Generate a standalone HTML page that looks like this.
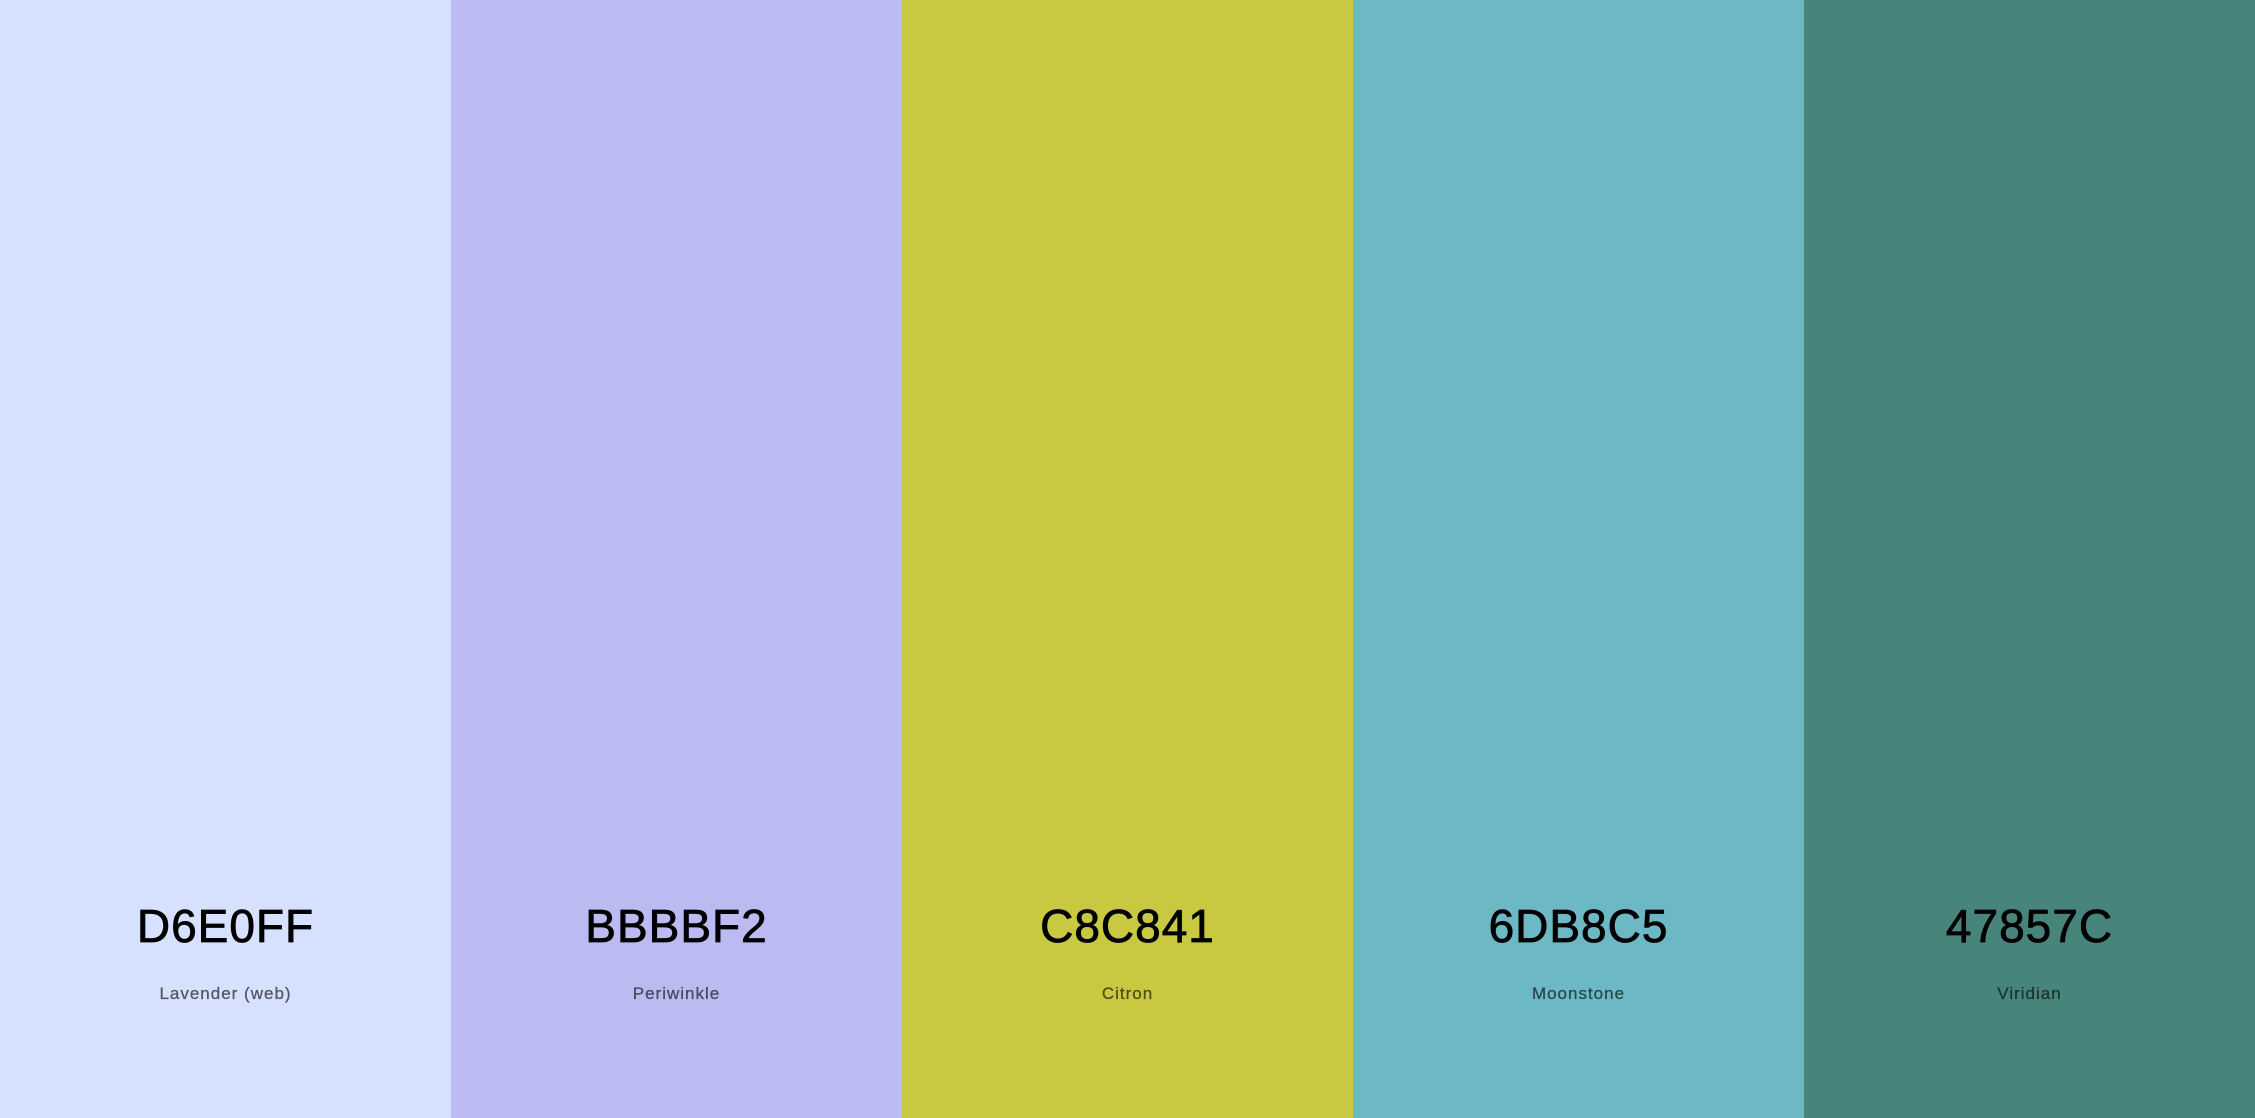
<!DOCTYPE html>
<html><head><meta charset="utf-8"><style>
html,body{margin:0;padding:0;width:2255px;height:1118px;overflow:hidden}
body{display:flex;font-family:"Liberation Sans",sans-serif}
.c{flex:1;position:relative;height:1118px}
.h{position:absolute;left:0;right:0;top:898px;text-align:center;font-size:46px;letter-spacing:1px;color:#000;line-height:56px;-webkit-text-stroke:0.8px #000}
.n{position:absolute;left:0;right:0;top:984px;text-align:center;font-size:17px;letter-spacing:1px;color:rgba(0,0,0,.6);line-height:20px;-webkit-text-stroke:0.3px rgba(0,0,0,.5)}
</style></head><body>
<div class="c" style="background:#D6E0FF"><div class="h">D6E0FF</div><div class="n">Lavender (web)</div></div>
<div class="c" style="background:#BBBBF2"><div class="h">BBBBF2</div><div class="n">Periwinkle</div></div>
<div class="c" style="background:#C8C841"><div class="h">C8C841</div><div class="n">Citron</div></div>
<div class="c" style="background:#6DB8C5"><div class="h">6DB8C5</div><div class="n">Moonstone</div></div>
<div class="c" style="background:#47857C"><div class="h">47857C</div><div class="n">Viridian</div></div>
</body></html>
